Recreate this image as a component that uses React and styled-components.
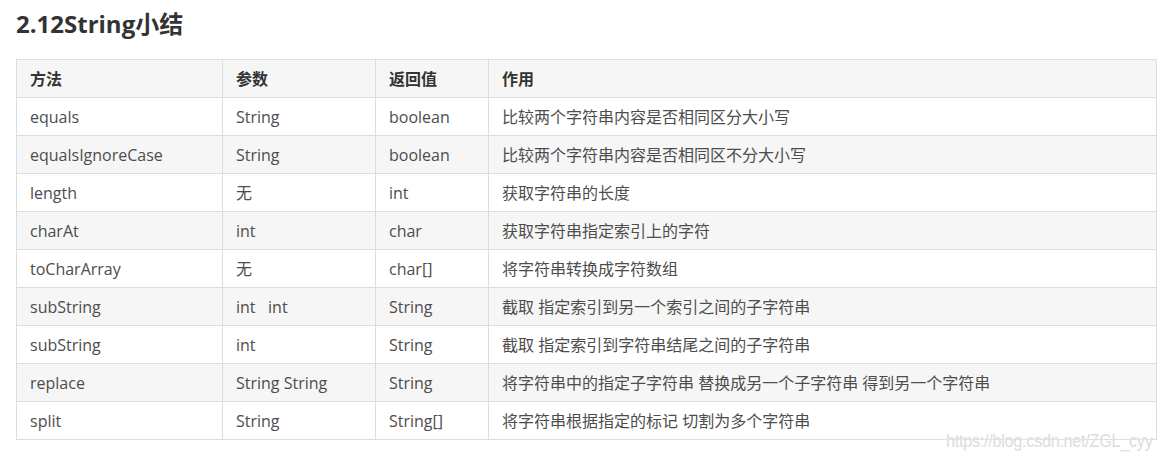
import React from "react";
import styled, { createGlobalStyle } from "styled-components";

const Global = createGlobalStyle`
  html, body { margin: 0; padding: 0; background: #fff; }
  body { font-family: "Open Sans", "Noto Sans CJK SC", sans-serif; }
`;

const Page = styled.div`
  position: relative;
  width: 1164px;
  height: 460px;
  padding: 0 0 0 16px;
  box-sizing: border-box;
`;

const Title = styled.h2`
  margin: 0;
  padding-top: 8px;
  height: 59px;
  box-sizing: border-box;
  font-family: "Open Sans", "Noto Sans CJK SC", sans-serif;
  font-size: 24px;
  line-height: 32px;
  font-weight: 700;
  color: #333;
`;

const Table = styled.table`
  border-collapse: collapse;
  width: 1140px;
  table-layout: fixed;
  font-size: 16px;
  color: #4d4d4d;
`;

const Cell = styled.td`
  border: 1px solid #dddddd;
  height: 38px;
  padding: 0 0 0 13px;
  box-sizing: border-box;
  line-height: 24px;
  vertical-align: middle;
  white-space: pre;
  font-family: "Open Sans", "Noto Sans CJK SC", sans-serif;
`;

const Head = styled(Cell).attrs({ as: "th" })`
  text-align: left;
  font-weight: 700;
  color: #333;
  background: #f6f6f6;
`;

const Row = styled.tr`
  background: ${(p) => (p.$striped ? "#f6f6f6" : "#fff")};
`;

const Watermark = styled.div`
  position: absolute;
  left: 946px;
  top: 431px;
  font-family: "Liberation Sans", sans-serif;
  font-size: 18px;
  line-height: 20px;
  letter-spacing: -0.3px;
  color: #dcdcdc;
  transform: scaleX(0.9);
  transform-origin: left top;
  text-shadow: 0 0 1px #fff;
  white-space: nowrap;
`;

const widths = [206, 153, 113, 668];
const headers = ["方法", "参数", "返回值", "作用"];
const rows = [
  ["equals", "String", "boolean", "比较两个字符串内容是否相同区分大小写"],
  ["equalsIgnoreCase", "String", "boolean", "比较两个字符串内容是否相同区不分大小写"],
  ["length", "无", "int", "获取字符串的长度"],
  ["charAt", "int", "char", "获取字符串指定索引上的字符"],
  ["toCharArray", "无", "char[]", "将字符串转换成字符数组"],
  ["subString", "int   int", "String", "截取 指定索引到另一个索引之间的子字符串"],
  ["subString", "int", "String", "截取 指定索引到字符串结尾之间的子字符串"],
  ["replace", "String String", "String", "将字符串中的指定子字符串 替换成另一个子字符串 得到另一个字符串"],
  ["split", "String", "String[]", "将字符串根据指定的标记 切割为多个字符串"],
];

export default function App() {
  return (
    <Page>
      <Global />
      <Title>2.12String小结</Title>
      <Table>
        <colgroup>
          {widths.map((w, i) => (
            <col key={i} style={{ width: w }} />
          ))}
        </colgroup>
        <thead>
          <tr>
            {headers.map((h) => (
              <Head key={h}>{h}</Head>
            ))}
          </tr>
        </thead>
        <tbody>
          {rows.map((r, i) => (
            <Row key={i} $striped={i % 2 === 1}>
              {r.map((c, j) => (
                <Cell key={j}>{c}</Cell>
              ))}
            </Row>
          ))}
        </tbody>
      </Table>
      <Watermark>https://blog.csdn.net/ZGL_cyy</Watermark>
    </Page>
  );
}
